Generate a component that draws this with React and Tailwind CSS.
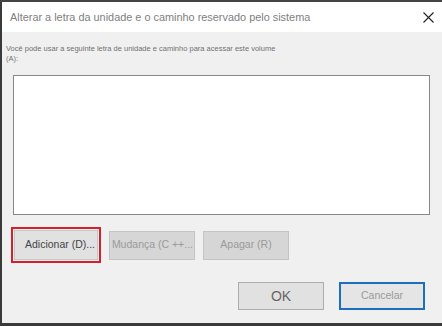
export default function App() {
  const font = { fontFamily: '"Liberation Sans", Arial, sans-serif' }
  return (
    <div className="w-[442px] h-[326px] bg-[#3a3a3a] overflow-hidden" style={font}>
      <div className="h-[2px] bg-[#444]" />
      <div className="ml-[2px] h-[321px] flex flex-col bg-[#f0f0f0]">
        <div className="h-[30px] bg-white flex items-center justify-between pl-[8px] pr-[8px]">
          <span className="text-[10.9px] text-[#808080]">Alterar a letra da unidade e o caminho reservado pelo sistema</span>
          <svg width="11" height="11" viewBox="0 0 11 11" className="text-[#222]">
            <path d="M0.5 0.5 L10.5 10.5 M10.5 0.5 L0.5 10.5" stroke="currentColor" strokeWidth="1.1" />
          </svg>
        </div>
        <div className="pl-[4px] pt-[12px] text-[7.5px] leading-[10px] text-[#707070]">
          <div>Você pode usar a seguinte letra de unidade e caminho para acessar este volume</div>
          <div>(A):</div>
        </div>
        <div className="ml-[11px] mt-[11px] w-[417px] h-[140px] bg-white border border-[#888]" />
        <div className="flex items-center mt-[12px] ml-[9px] gap-[8px]">
          <div className="border-2 border-[#d81e2a] p-[1px]">
            <div className="w-[84px] h-[30px] bg-[#e1e1e1] border border-[#c8c8c8] flex items-center justify-end pr-[2px] text-[10.5px] text-[#444]">Adicionar (D)...</div>
          </div>
          <div className="w-[86px] h-[29px] bg-[#d6d6d6] border border-[#c4c4c4] flex items-center justify-end pr-[1px] overflow-hidden whitespace-nowrap text-[10.5px] text-[#9a9a9a]">Mudança (C ++...</div>
          <div className="w-[86px] h-[29px] bg-[#d6d6d6] border border-[#c4c4c4] flex items-center justify-center text-[10.5px] text-[#9a9a9a]">Apagar (R)</div>
        </div>
        <div className="flex justify-end mt-[19px] mr-[17px] gap-[15px]">
          <div className="w-[86px] h-[28px] bg-[#e1e1e1] border border-[#adadad] flex items-center justify-center text-[14px] text-[#666]">OK</div>
          <div className="w-[86px] h-[28px] bg-[#e5e5e5] border-2 border-[#1a6fc0] flex items-center justify-center text-[10.5px] text-[#9a9a9a]">Cancelar</div>
        </div>
      </div>
    </div>
  )
}
